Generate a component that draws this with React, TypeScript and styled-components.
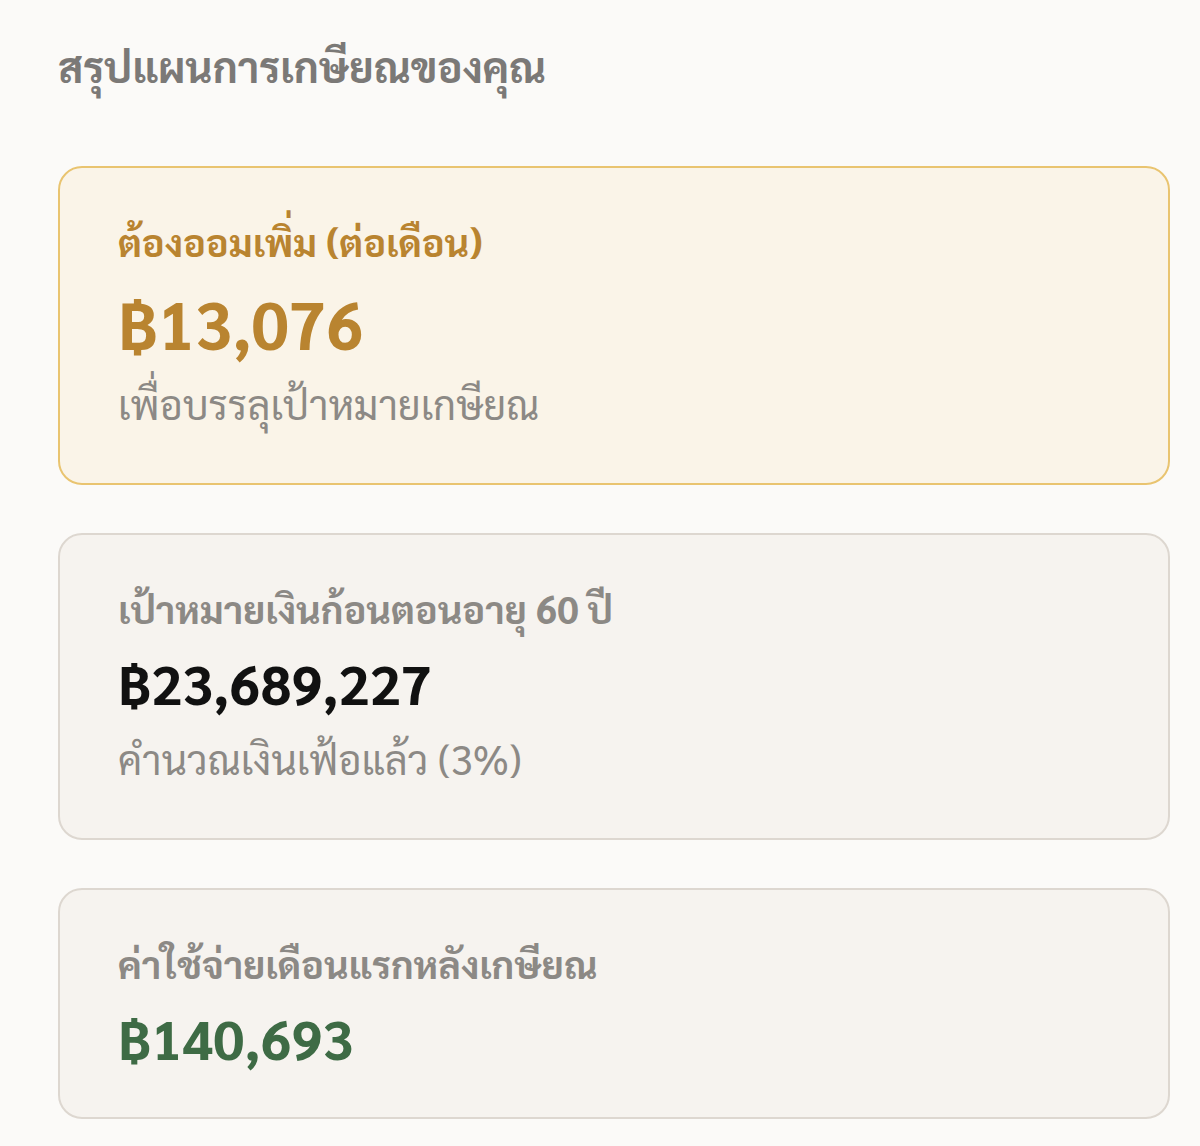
import React from "react";
import styled, { createGlobalStyle } from "styled-components";

const Global = createGlobalStyle`
  html, body { margin: 0; padding: 0; background: #fbfaf8; }
  body { font-family: "Sarabun", "Noto Sans Thai Looped", "Noto Sans", sans-serif; }
`;

const Page = styled.div`
  padding: 36px 30px 30px 58px;
  display: flex;
  flex-direction: column;
`;

const Title = styled.h2`
  margin: 0 0 70px 0;
  font-size: 42px;
  font-weight: 700;
  color: #7b7977;
  line-height: 60px;
`;

const Cards = styled.div`
  display: flex;
  flex-direction: column;
  gap: 48px;
`;

type Tone = "gold" | "dark" | "green";

const Card = styled.div<{ $highlight?: boolean }>`
  border-radius: 24px;
  border: 2px solid ${(p) => (p.$highlight ? "#e9c470" : "#ddd7d0")};
  background: ${(p) => (p.$highlight ? "#faf4e8" : "#f6f3ef")};
  padding: 49px 58px 52px 58px;
  display: flex;
  flex-direction: column;
`;

const Label = styled.div<{ $tone: Tone }>`
  font-size: 38px;
  font-weight: 700;
  line-height: 48px;
  color: ${(p) => (p.$tone === "gold" ? "#b98430" : "#8c8985")};
`;

const Value = styled.div<{ $tone: Tone; $big?: boolean }>`
  font-size: ${(p) => (p.$big ? "66px" : "55px")};
  font-weight: 700;
  line-height: ${(p) => (p.$big ? "64px" : "56px")};
  margin-top: ${(p) => (p.$big ? "26px" : "22px")};
  color: ${(p) =>
    p.$tone === "gold" ? "#b98430" : p.$tone === "green" ? "#3e6b45" : "#111111"};
`;

const Sub = styled.div`
  margin-top: 20px;
  font-size: 40px;
  font-weight: 400;
  line-height: 56px;
  color: #8c8985;
`;

export default function App() {
  return (
    <>
      <Global />
      <Page>
        <Title>สรุปแผนการเกษียณของคุณ</Title>
        <Cards>
          <Card $highlight>
            <Label $tone="gold">ต้องออมเพิ่ม (ต่อเดือน)</Label>
            <Value $tone="gold" $big>฿13,076</Value>
            <Sub>เพื่อบรรลุเป้าหมายเกษียณ</Sub>
          </Card>
          <Card>
            <Label $tone="dark">เป้าหมายเงินก้อนตอนอายุ 60 ปี</Label>
            <Value $tone="dark">฿23,689,227</Value>
            <Sub>คำนวณเงินเฟ้อแล้ว (3%)</Sub>
          </Card>
          <Card>
            <Label $tone="dark">ค่าใช้จ่ายเดือนแรกหลังเกษียณ</Label>
            <Value $tone="green">฿140,693</Value>
          </Card>
        </Cards>
      </Page>
    </>
  );
}
